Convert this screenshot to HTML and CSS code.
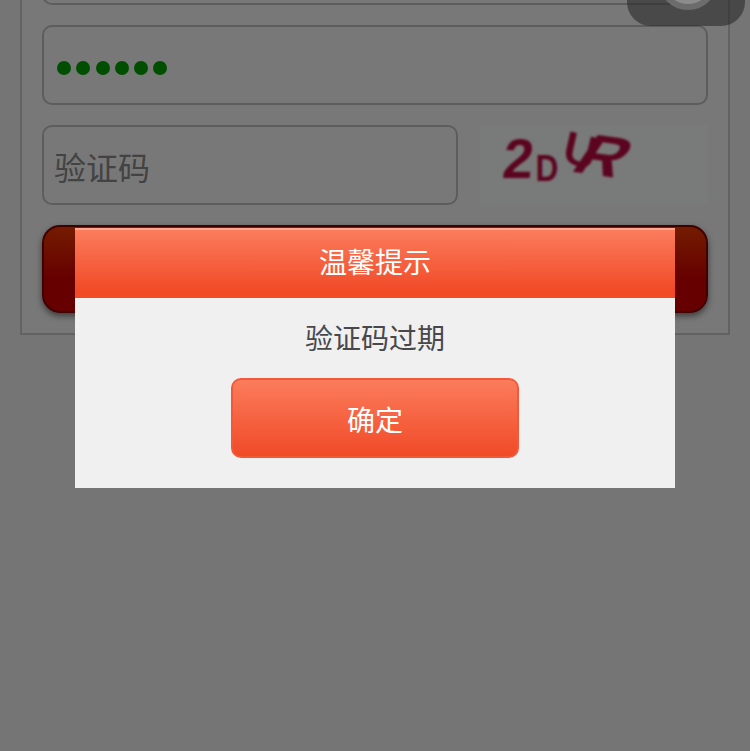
FILE: index.html
```html
<!DOCTYPE html>
<html lang="zh-CN">
<head>
<meta charset="utf-8">
<title>登录</title>
<link rel="stylesheet" href="styles.css">
</head>
<body>
<main class="panel">
  <div class="field"></div>
  <div class="field password">
    <span class="dot"></span><span class="dot"></span><span class="dot"></span><span class="dot"></span><span class="dot"></span><span class="dot"></span>
  </div>
  <div class="captcha-row">
    <input class="field code" type="text" placeholder="验证码">
    <div class="captcha">
      <span class="c c2">2</span><span class="c cd">D</span><span class="c cu">U</span><span class="c cr">R</span>
    </div>
  </div>
  <div class="login"></div>
</main>
<div class="overlay">
  <section class="dialog">
    <h1 class="dialog-title">温馨提示</h1>
    <div class="dialog-body">
      <p class="dialog-msg">验证码过期</p>
      <button class="dialog-btn" type="button">确定</button>
    </div>
  </section>
</div>
<div class="assist"><div class="assist-ring"></div></div>
</body>
</html>
```
FILE: styles.css
```css
* { box-sizing: border-box; }
html, body { margin: 0; height: 751px; overflow: hidden; }
body {
  background: #eaeaea;
  font-family: "Noto Sans CJK SC", "Liberation Sans", sans-serif;
}
.panel {
  margin: -97px 20px 0;
  padding: 20px 20px 20px;
  background: #f0f0f0;
  border: 2px solid #c4c4c4;
  display: flex;
  flex-direction: column;
  gap: 20px;
}
.field {
  display: block;
  height: 80px;
  border: 2px solid #bababa;
  border-radius: 10px;
  background: #f0f0f0;
}
.password {
  display: flex;
  align-items: center;
  gap: 5.3px;
  padding: 6px 0 0 13px;
}
.dot {
  width: 14px;
  height: 14px;
  border-radius: 50%;
  background: #009c00;
}
.captcha-row {
  display: flex;
  justify-content: space-between;
  height: 80px;
}
.code {
  width: 416px;
  padding: 2px 0 0 10px;
  font: 32px "Noto Sans CJK SC", sans-serif;
  outline: none;
}
.code::placeholder { color: #868686; opacity: 1; }
.captcha {
  width: 228px;
  background: #f3f4f4;
  display: flex;
  align-items: flex-start;
  padding-left: 23px;
  color: #b80a40;
  filter: blur(0.9px);
}
.c {
  display: block;
  font-family: "Liberation Sans", sans-serif;
  font-weight: 700;
  line-height: 1;
}
.c2 { font-size: 56px; margin-top: 6px; transform: scaleX(0.98) skewX(-6deg); }
.cd { font-size: 36px; margin: 26px 0 0 0; transform: scaleX(0.88); }
.cu { font-size: 46px; font-style: italic; margin: 2px 0 0 3px; transform: rotate(14deg) skewX(12deg); }
.cr { font-size: 58px; margin: 2px 0 0 -13px; transform: rotate(8deg) skewX(-26deg) scaleX(1.1); }
.login {
  height: 88px;
  border: 2px solid #800000;
  border-radius: 18px;
  background: linear-gradient(#e83800, #cc0000 62%);
  box-shadow: 0 3px 6px rgba(0, 0, 0, 0.5);
}
.overlay {
  position: fixed;
  inset: 0;
  background: rgba(0, 0, 0, 0.5);
  display: flex;
  flex-direction: column;
  align-items: center;
  padding-top: 228px;
}
.dialog { width: 600px; height: 260px; background: #f0f0f0; display: flex; flex-direction: column; }
.dialog-title {
  margin: 0;
  height: 70px;
  border-top: 2px solid #ffa892;
  background: linear-gradient(#fb7c5c, #f14a27 90%);
  color: #fff;
  font-size: 28px;
  font-weight: 400;
  line-height: 63px;
  text-align: center;
}
.dialog-body { display: flex; flex-direction: column; align-items: center; }
.dialog-msg {
  margin: 19px 0 1px;
  height: 40px;
  color: #48484a;
  font-size: 28px;
  line-height: 40px;
}
.dialog-btn {
  margin-top: 20px;
  width: 288px;
  height: 80px;
  border: 2px solid #f4583a;
  border-radius: 10px;
  background: linear-gradient(#fb7c5c, #f14a27);
  color: #fff;
  font: 28px/1 "Noto Sans CJK SC", sans-serif;
  padding: 2px 0 0;
}
.assist {
  position: fixed;
  left: 627px;
  top: -70px;
  width: 118px;
  height: 96px;
  border-radius: 24px;
  background: rgba(42, 42, 42, 0.6);
  overflow: hidden;
}
.assist-ring {
  position: absolute;
  left: 31px;
  top: 20px;
  width: 60px;
  height: 60px;
  border-radius: 50%;
  background: #8c8c8c;
  border: 6px solid #6c6c6c;
}
```
